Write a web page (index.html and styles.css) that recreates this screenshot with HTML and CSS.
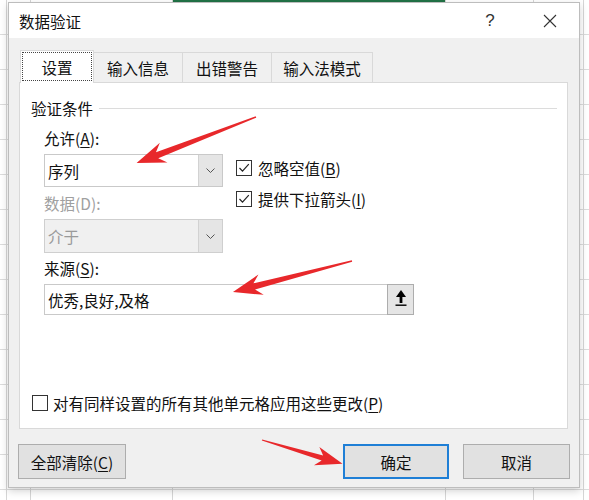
FILE: index.html
```html
<!DOCTYPE html>
<html lang="zh-CN">
<head>
<meta charset="utf-8">
<title>数据验证</title>
<link rel="stylesheet" href="styles.css">
</head>
<body>
<div class="dialog">
  <div class="titlebar">
    <span class="title">数据验证</span>
    <span class="help">?</span>
    <span class="close"><svg width="14" height="14" viewBox="0 0 14 14"><path d="M1 1L13 13M13 1L1 13" stroke="#333" stroke-width="1.1" fill="none"/></svg></span>
  </div>
  <div class="content">
    <div class="tabs">
      <div class="tab active">设置<span class="focus"></span></div>
      <div class="tab t2">输入信息</div>
      <div class="tab t3">出错警告</div>
      <div class="tab t4">输入法模式</div>
    </div>
    <div class="panel">
      <div class="group-head"><span>验证条件</span><i class="rule"></i></div>
      <div class="form">
        <div class="cols">
          <div class="leftcol">
            <div class="lbl">允许(<u>A</u>):</div>
            <div class="select"><span class="val">序列</span><span class="drop"><svg width="9" height="5" viewBox="0 0 9 5"><path d="M0.5 0.5L4.5 4.5L8.5 0.5" stroke="#555" stroke-width="1" fill="none"/></svg></span></div>
            <div class="lbl dis">数据(D):</div>
            <div class="select dis"><span class="val">介于</span><span class="drop"><svg width="9" height="5" viewBox="0 0 9 5"><path d="M0.5 0.5L4.5 4.5L8.5 0.5" stroke="#555" stroke-width="1" fill="none"/></svg></span></div>
          </div>
          <div class="rightcol">
            <div class="check"><span class="box"><svg width="14" height="14" viewBox="0 0 14 14"><path d="M2.5 7L5.5 10.2L11.8 3.2" stroke="#222" stroke-width="1.2" fill="none"/></svg></span><span>忽略空值(<u>B</u>)</span></div>
            <div class="check"><span class="box"><svg width="14" height="14" viewBox="0 0 14 14"><path d="M2.5 7L5.5 10.2L11.8 3.2" stroke="#222" stroke-width="1.2" fill="none"/></svg></span><span>提供下拉箭头(<u>I</u>)</span></div>
          </div>
        </div>
        <div class="lbl src">来源(<u>S</u>):</div>
        <div class="source">
          <span class="val">优秀,良好,及格</span>
          <span class="pick"><svg width="12" height="17" viewBox="0 0 12 17"><path d="M6 0L11 7H1Z" fill="#000"/><rect x="4.6" y="6" width="2.8" height="7" fill="#000"/><rect x="0.5" y="14.5" width="11" height="1.4" fill="#000"/></svg></span>
        </div>
      </div>
      <div class="check apply"><span class="box"></span><span>对有同样设置的所有其他单元格应用这些更改(<u>P</u>)</span></div>
    </div>
    <div class="buttons">
      <div class="btn clear">全部清除(<u>C</u>)</div>
      <div class="btn ok">确定</div>
      <div class="btn cancel">取消</div>
    </div>
  </div>
</div>
<svg class="arrows" width="589" height="500" viewBox="0 0 589 500">
  <g fill="#e8282b">
    <polygon transform="translate(256,117) rotate(158.9)" points="0,-0.7 106,-3.2 99,-10.5 128,0 99,10.5 106,3.2 0,0.7"/>
    <polygon transform="translate(352,261) rotate(165.4)" points="0,-0.7 101,-3.2 94,-10.5 123,0 94,10.5 101,3.2 0,0.7"/>
    <polygon transform="translate(262,440) rotate(16.5)" points="0,-0.6 63,-2.6 57,-9.5 84,0 57,9.5 63,2.6 0,0.6"/>
  </g>
</svg>
</body>
</html>
```

FILE: styles.css
```css
html, body {
  margin: 0;
}
body {
  width: 589px;
  height: 500px;
  box-sizing: border-box;
  padding: 2px 0 0 8px;
  overflow: hidden;
  position: relative;
  font-family: "Noto Sans CJK SC", "Noto Sans", sans-serif;
  font-size: 15.5px;
  color: #111;
  background-color: #fff;
  background-image:
    linear-gradient(#217346, #217346),
    linear-gradient(#d6d6d6, #d6d6d6),
    linear-gradient(#d6d6d6, #d6d6d6),
    linear-gradient(#d6d6d6, #d6d6d6),
    linear-gradient(#d6d6d6, #d6d6d6),
    linear-gradient(#d6d6d6, #d6d6d6),
    linear-gradient(#d6d6d6, #d6d6d6),
    repeating-linear-gradient(to bottom, #fff 0 34px, #dcdcdc 34px 35px);
  background-size: 272px 2px, 1px 100%, 1px 100%, 1px 100%, 1px 100%, 1px 100%, 1px 100%, auto;
  background-position: 173px 0, 6px 0, 30px 0, 172px 0, 445px 0, 533px 0, 583px 0, 0 0;
  background-repeat: no-repeat, no-repeat, no-repeat, no-repeat, no-repeat, no-repeat, no-repeat, repeat;
}

u { text-decoration-thickness: 1px; text-underline-offset: 2px; }

.dialog {
  width: 572px;
  height: 486px;
  box-sizing: border-box;
  border: 1px solid #bdbdbd;
  background: #f0f0f0;
  display: flex;
  flex-direction: column;
  box-shadow: 0 3px 8px rgba(0, 0, 0, 0.18);
}

.titlebar {
  flex: none;
  height: 35px;
  background: #fff;
  display: flex;
  align-items: center;
  padding: 0 19px 0 10px;
}
.title { line-height: 20px; font-size: 15.5px; color: #111; }
.help {
  margin-left: auto;
  width: 20px;
  text-align: center;
  font-family: "Liberation Sans", sans-serif;
  font-size: 17px;
  color: #333;
}
.close {
  margin-left: 40px;
  width: 20px;
  height: 20px;
  display: flex;
  align-items: center;
  justify-content: center;
}

.content {
  flex: 1;
  padding: 12px 11px 0 10px;
  display: flex;
  flex-direction: column;
}

.tabs {
  display: flex;
  align-items: flex-end;
  height: 32px;
  padding-left: 1px;
}
.tab {
  height: 30px;
  box-sizing: border-box;
  border: 1px solid #d9d9d9;
  border-bottom: none;
  border-left: none;
  background: #f0f0f0;
  display: flex;
  align-items: center;
  justify-content: center;
  line-height: 20px;
}
.tab.active {
  width: 74px;
  height: 33px;
  margin-bottom: -1px;
  border-left: 1px solid #d9d9d9;
  background: #fff;
  position: relative;
  z-index: 1;
}
.focus {
  position: absolute;
  left: 1px;
  right: 1px;
  top: 1px;
  bottom: 2px;
  border: 1px dotted #444;
}
.t2 { width: 89px; }
.t3 { width: 89px; }
.t4 { width: 101px; }

.panel {
  height: 347px;
  box-sizing: border-box;
  border: 1px solid #d9d9d9;
  background: #fff;
  padding: 15px 10px 15px 11px;
  display: flex;
  flex-direction: column;
}

.group-head {
  display: flex;
  align-items: center;
  line-height: 20px;
}
.group-head .rule {
  flex: 1;
  height: 1px;
  background: #dcdcdc;
  margin-left: 6px;
}

.form { margin: 10px 0 0 13px; }
.cols { display: flex; }
.leftcol { width: 179px; }

.lbl { line-height: 20px; height: 20px; }
.lbl.dis { color: #a0a0a0; margin-top: 6px; }
.lbl.src { margin-top: 5px; }

.select {
  margin-top: 6px;
  height: 33px;
  box-sizing: border-box;
  border: 1px solid #c9c9c9;
  background: #fff;
  display: flex;
}
.select .val {
  flex: 1;
  padding-left: 3px;
  display: flex;
  align-items: center;
}
.select .drop {
  width: 23px;
  background: #e5e5e5;
  border-left: 1px solid #d2d2d2;
  display: flex;
  align-items: center;
  justify-content: center;
}
.select.dis {
  height: 34px;
  background: #f0f0f0;
  border-color: #cfcfcf;
  color: #9a9a9a;
}

.rightcol {
  margin-left: 13px;
  padding-top: 30px;
  display: flex;
  flex-direction: column;
  gap: 11px;
}

.check {
  display: flex;
  align-items: center;
  gap: 6px;
  line-height: 20px;
}
.box {
  width: 16px;
  height: 16px;
  box-sizing: border-box;
  border: 1px solid #333;
  background: #fff;
  display: flex;
  align-items: center;
  justify-content: center;
  flex: none;
}

.source {
  margin-top: 6px;
  height: 31px;
  width: 370px;
  display: flex;
}
.source .val {
  flex: 1;
  border: 1px solid #c9c9c9;
  border-right: none;
  padding-left: 3px;
  display: flex;
  align-items: center;
}
.source .pick {
  width: 27px;
  box-sizing: border-box;
  border: 1px solid #adadad;
  background: #e5e5e5;
  display: flex;
  align-items: center;
  justify-content: center;
  padding-bottom: 3px;
}

.apply { margin-top: auto; gap: 5px; padding-left: 1px; }

.buttons {
  margin: 15px -2px 0 -1px;
  height: 35px;
  display: flex;
}
.btn {
  height: 35px;
  box-sizing: border-box;
  border: 1px solid #adadad;
  background: #e1e1e1;
  display: flex;
  align-items: center;
  justify-content: center;
  line-height: 20px;
}
.btn.clear { width: 108px; }
.btn.ok { width: 106px; margin-left: auto; border: 2px solid #1f7fd6; }
.btn.cancel { width: 107px; margin-left: 14px; }

.arrows {
  position: absolute;
  left: 0;
  top: 0;
  pointer-events: none;
}
```
